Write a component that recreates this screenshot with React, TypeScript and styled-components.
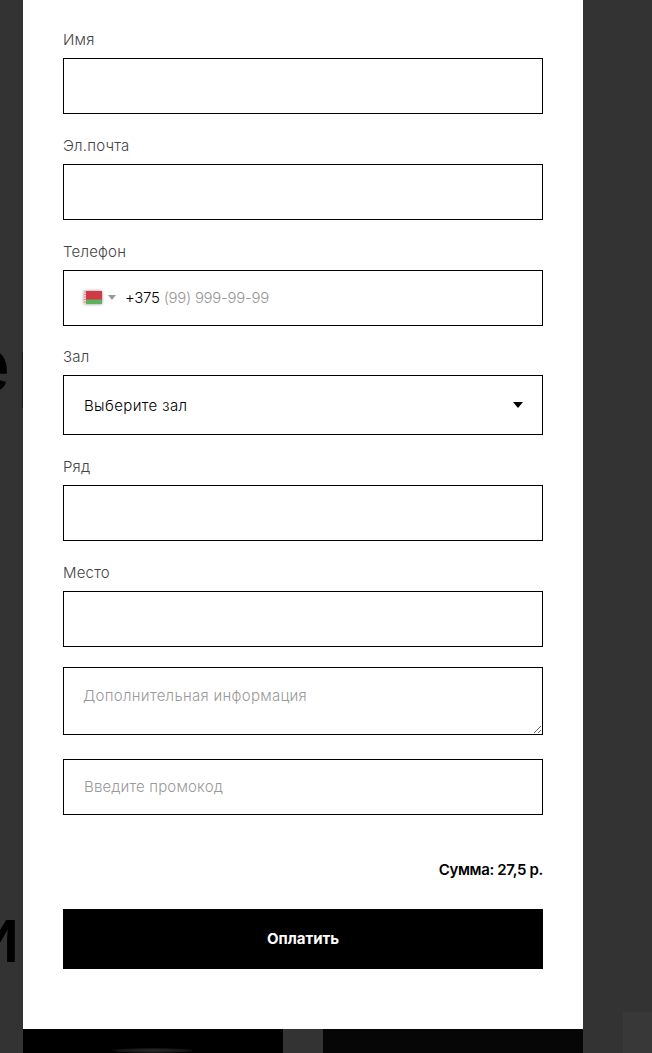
import React from "react";
import styled, { createGlobalStyle } from "styled-components";

const FONT = `"Inter", "Noto Sans", "Liberation Sans", sans-serif`;

const Global = createGlobalStyle`
  html, body { margin: 0; padding: 0; background: #333333; }
  body { width: 652px; height: 1053px; overflow: hidden; font-family: ${FONT}; }
  * { box-sizing: border-box; }
`;

const Page = styled.div`
  position: relative;
  width: 652px;
  height: 1053px;
  overflow: hidden;
  padding-left: 23px;
`;

const BackdropGlyph = styled.span<{ $size: number; $left: number; $top: number }>`
  position: absolute;
  left: ${(p) => p.$left}px;
  top: ${(p) => p.$top}px;
  font: 600 ${(p) => p.$size}px/1 ${FONT};
  color: #000;
`;

const BackdropSliver = styled.i`
  position: absolute;
  left: 22px;
  top: 352px;
  width: 1px;
  height: 56px;
  background: #1c1c1c;
`;

const CornerShade = styled.i`
  position: absolute;
  left: 623px;
  top: 1012px;
  width: 29px;
  height: 41px;
  background: #383838;
`;

const Modal = styled.form`
  position: relative;
  width: 560px;
  height: 1029px;
  background: #fff;
  padding: 28px 40px 0;
`;

const Field = styled.div<{ $gap?: number }>`
  margin-bottom: ${(p) => p.$gap ?? 20}px;
`;

const Label = styled.label`
  display: block;
  height: 30px;
  padding-top: 2px;
  font-size: 15px;
  line-height: 20px;
  font-weight: 300;
  letter-spacing: 0.2px;
  color: #444;
`;

const Input = styled.input`
  display: block;
  width: 100%;
  height: 56px;
  border: 1px solid #000;
  border-radius: 0;
  background: #fff;
  padding: 0 20px 2px;
  font: 300 15px ${FONT};
  letter-spacing: 0.15px;
  outline: none;
  &::placeholder { color: #999; opacity: 1; }
`;

const PhoneBox = styled.div`
  display: flex;
  align-items: center;
  height: 56px;
  border: 1px solid #000;
  padding: 0 0 1px 20px;
  font-size: 15px;
  font-weight: 300;
  letter-spacing: -0.3px;
`;

const Flag = styled.svg`
  width: 18px;
  height: 13px;
  flex: none;
  box-shadow: 0 0 3px rgba(0, 0, 0, 0.45);
`;

const FlagCaret = styled.i`
  width: 0;
  height: 0;
  margin: 0 9px 0 6px;
  border-left: 4px solid transparent;
  border-right: 4px solid transparent;
  border-top: 5px solid #999;
`;

const DialCode = styled.span`
  color: #000;
  margin-right: 4px;
`;

const PhoneMask = styled.span`
  color: #999;
`;

const SelectWrap = styled.div`
  position: relative;
`;

const Select = styled.select`
  display: block;
  width: 100%;
  height: 60px;
  border: 1px solid #000;
  border-radius: 0;
  background: #fff;
  appearance: none;
  padding: 0 20px;
  font: 300 15px ${FONT};
  letter-spacing: 0.38px;
  color: #000;
  outline: none;
`;

const SelectCaret = styled.i`
  position: absolute;
  right: 20px;
  top: 27px;
  width: 0;
  height: 0;
  border-left: 5px solid transparent;
  border-right: 5px solid transparent;
  border-top: 6px solid #000;
  pointer-events: none;
`;

const TextArea = styled.textarea`
  display: block;
  width: 100%;
  height: 68px;
  border: 1px solid #000;
  border-radius: 0;
  padding: 19px 20px 19px 19px;
  font: 300 15px/18px ${FONT};
  letter-spacing: 0.3px;
  outline: none;
  &::placeholder { color: #999; opacity: 1; }
`;

const Total = styled.div`
  text-align: right;
  font-size: 15px;
  line-height: 20px;
  font-weight: 600;
  letter-spacing: -0.35px;
  color: #000;
  margin: 45px 0 29px;
`;

const PayButton = styled.button`
  display: block;
  width: 100%;
  height: 60px;
  border: 0;
  padding: 0 0 2px;
  background: #000;
  color: #fff;
  font: 700 15px ${FONT};
`;

const Cards = styled.div`
  display: flex;
  gap: 40px;
  width: 560px;
  position: relative;
`;

const Card = styled.div<{ $tone: string }>`
  width: 260px;
  height: 24px;
  background: ${(p) => p.$tone};
  position: relative;
  overflow: hidden;
`;

const CardGlow = styled.i`
  position: absolute;
  left: 90px;
  top: 19px;
  width: 80px;
  height: 5px;
  border-radius: 50%;
  background: radial-gradient(ellipse at center, #2c2c2c 0%, #141414 60%, #000 100%);
`;

const fields = [
  { label: "Имя" },
  { label: "Эл.почта" },
];

export default function App() {
  return (
    <Page>
      <Global />
      <BackdropGlyph $size={78} $left={-36} $top={325}>е</BackdropGlyph>
      <BackdropSliver />
      <BackdropGlyph $size={58} $left={-25} $top={912}>И</BackdropGlyph>
      <CornerShade />
      <Modal>
        {fields.map((f) => (
          <Field key={f.label}>
            <Label>{f.label}</Label>
            <Input />
          </Field>
        ))}
        <Field $gap={19}>
          <Label>Телефон</Label>
          <PhoneBox>
            <Flag viewBox="0 0 18 13">
              <rect width="18" height="13" fill="#cf3a46" />
              <rect y="8.5" width="18" height="4.5" fill="#5fb15f" />
              <rect width="2" height="13" fill="#f2d5d5" />
              <path d="M0.5 1h1M0.5 3.5h1M0.5 6h1M0.5 8.5h1M0.5 11h1" stroke="#cf3a46" strokeWidth="1" />
            </Flag>
            <FlagCaret />
            <DialCode>+375</DialCode>
            <PhoneMask>(99) 999-99-99</PhoneMask>
          </PhoneBox>
        </Field>
        <Field>
          <Label>Зал</Label>
          <SelectWrap>
            <Select defaultValue="">
              <option value="">Выберите зал</option>
            </Select>
            <SelectCaret />
          </SelectWrap>
        </Field>
        <Field>
          <Label>Ряд</Label>
          <Input />
        </Field>
        <Field>
          <Label>Место</Label>
          <Input />
        </Field>
        <Field $gap={24}>
          <TextArea placeholder="Дополнительная информация" />
        </Field>
        <Input placeholder="Введите промокод" />
        <Total>Сумма: 27,5 р.</Total>
        <PayButton type="button">Оплатить</PayButton>
      </Modal>
      <Cards>
        <Card $tone="#000"><CardGlow /></Card>
        <Card $tone="#060606" />
      </Cards>
    </Page>
  );
}
